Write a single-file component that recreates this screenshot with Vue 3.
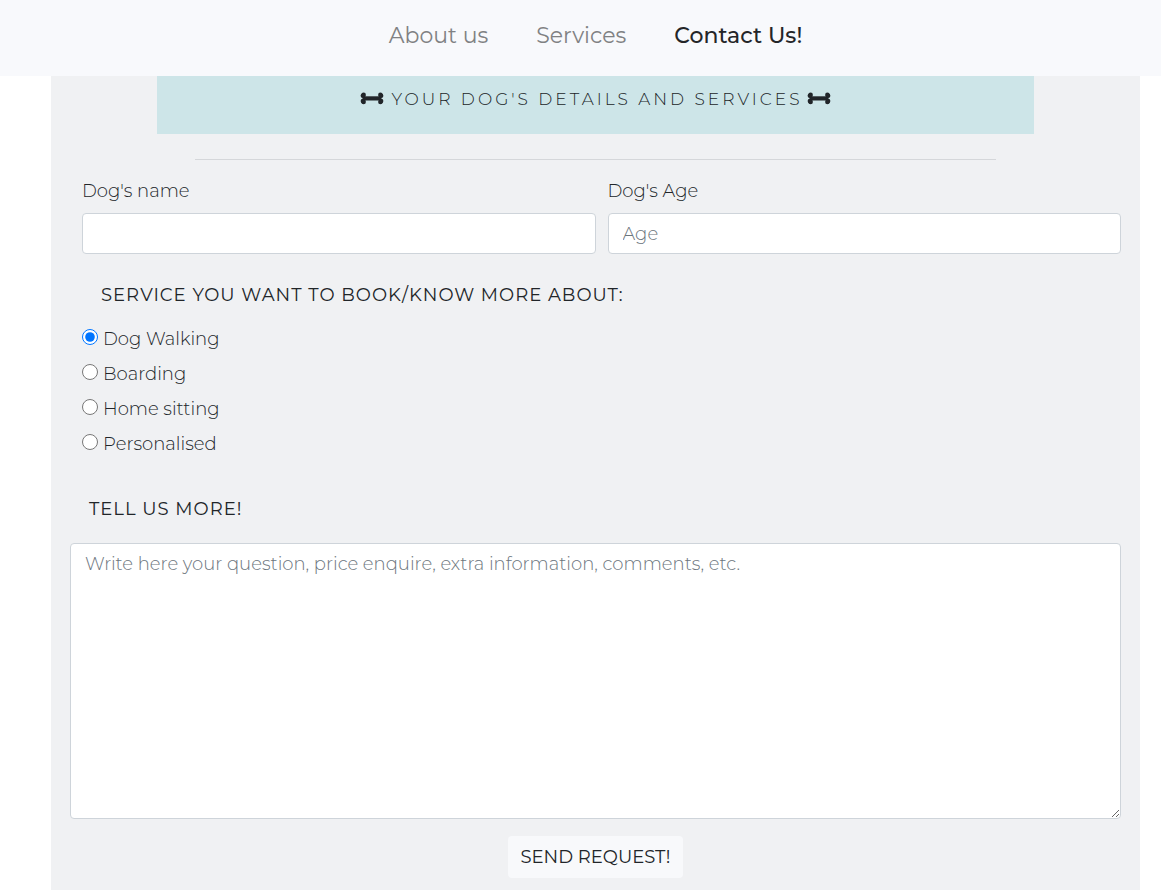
<script setup>
import { ref } from 'vue'

const links = [
  { label: 'About us', href: '#about', active: false },
  { label: 'Services', href: '#services', active: false },
  { label: 'Contact Us!', href: '#contact', active: true },
]

const services = [
  { value: 'walking', label: 'Dog Walking' },
  { value: 'boarding', label: 'Boarding' },
  { value: 'sitting', label: 'Home sitting' },
  { value: 'personalised', label: 'Personalised' },
]

const dogName = ref('')
const dogAge = ref('')
const service = ref('walking')
const message = ref('')
</script>

<template>
  <div class="page">
    <header class="navbar">
      <nav class="nav">
        <a
          v-for="link in links"
          :key="link.href"
          :href="link.href"
          class="nav-link"
          :class="{ active: link.active }"
        >{{ link.label }}</a>
      </nav>
    </header>

    <main class="panel">
      <h2 class="banner">
        <svg class="bone" viewBox="0 0 24 14" aria-hidden="true">
          <path d="M2.5 4.300h19v4.200h-19z" />
          <circle cx="3.6" cy="2.9" r="2.3" />
          <circle cx="2.9" cy="3.7" r="2.3" />
          <circle cx="3.6" cy="9.9" r="2.3" />
          <circle cx="2.9" cy="9.1" r="2.3" />
          <circle cx="20.4" cy="2.9" r="2.3" />
          <circle cx="21.1" cy="3.7" r="2.3" />
          <circle cx="20.4" cy="9.9" r="2.3" />
          <circle cx="21.1" cy="9.1" r="2.3" />
        </svg>
        <span class="banner-text">Your dog's details and services</span>
        <svg class="bone" viewBox="0 0 24 14" aria-hidden="true">
          <path d="M2.5 4.300h19v4.200h-19z" />
          <circle cx="3.6" cy="2.9" r="2.3" />
          <circle cx="2.9" cy="3.7" r="2.3" />
          <circle cx="3.6" cy="9.9" r="2.3" />
          <circle cx="2.9" cy="9.1" r="2.3" />
          <circle cx="20.4" cy="2.9" r="2.3" />
          <circle cx="21.1" cy="3.7" r="2.3" />
          <circle cx="20.4" cy="9.9" r="2.3" />
          <circle cx="21.1" cy="9.1" r="2.3" />
        </svg>
      </h2>
      <hr class="rule" />

      <form class="form" @submit.prevent>
        <div class="row">
          <div class="field">
            <label class="label" for="dog-name">Dog's name</label>
            <input id="dog-name" v-model="dogName" class="control" type="text" />
          </div>
          <div class="field">
            <label class="label" for="dog-age">Dog's Age</label>
            <input id="dog-age" v-model="dogAge" class="control" type="text" placeholder="Age" />
          </div>
        </div>

        <fieldset class="services">
          <legend class="heading">Service you want to book/know more about:</legend>
          <label v-for="item in services" :key="item.value" class="option" :for="item.value">
            <input :id="item.value" v-model="service" class="radio" type="radio" name="service" :value="item.value" />
            <span>{{ item.label }}</span>
          </label>
        </fieldset>

        <label class="heading more" for="message">Tell us more!</label>
        <textarea
          id="message"
          v-model="message"
          class="control message"
          placeholder="Write here your question, price enquire, extra information, comments, etc."
        ></textarea>

        <button class="send" type="submit">SEND REQUEST!</button>
      </form>
    </main>
  </div>
</template>

<style>
body {
  margin: 0;
  background: #fff;
}
</style>

<style scoped>
.page,
.page * {
  box-sizing: border-box;
}

.page {
  min-height: 100vh;
  display: flex;
  flex-direction: column;
  color: #212529;
  font-family: Montserrat, Inter, "Open Sans", sans-serif;
  font-size: 18px;
  font-weight: 300;
  line-height: 26px;
}

.navbar {
  padding: 20px 0 24px 30px;
  background: #f8f9fc;
}

.nav {
  display: flex;
  justify-content: center;
  gap: 48px;
}

.nav-link {
  color: #808183;
  font-size: 22px;
  font-weight: 400;
  line-height: 32px;
  text-decoration: none;
}

.nav-link.active {
  color: #242528;
  font-weight: 500;
}

.panel {
  flex: 1;
  margin: 0 21px 0 51px;
  padding-bottom: 12px;
  background: #f0f1f3;
}

.banner {
  display: flex;
  justify-content: center;
  align-items: center;
  gap: 7px;
  margin: 0 106px;
  padding: 10px 0 22px;
  background: #cde5e8;
  font-size: 17px;
  font-weight: 300;
  line-height: 26px;
  letter-spacing: 3px;
  text-transform: uppercase;
}

.banner-text {
  margin-right: -3px;
}

.bone {
  width: 24px;
  height: 14px;
  fill: #212529;
}

.rule {
  height: 1px;
  margin: 25px 144px 18px;
  border: 0;
  background: #d5d7da;
}

.form {
  display: flex;
  flex-direction: column;
  padding: 0 19px;
}

.row {
  display: grid;
  grid-template-columns: 1fr 1fr;
  gap: 12px;
  padding-left: 12px;
}

.field {
  display: flex;
  flex-direction: column;
  gap: 9px;
}

.control {
  width: 100%;
  height: 41px;
  padding: 7px 14px;
  border: 1px solid #ced4da;
  border-radius: 4px;
  background: #fff;
  color: #495057;
  font: inherit;
}

.control::placeholder {
  color: #6c757d;
  opacity: 1;
}

.services {
  margin: 28px 0 0;
  padding: 0 0 0 12px;
  border: 0;
}

.heading {
  padding: 0 19px;
  font-weight: 400;
  letter-spacing: 1px;
  text-transform: uppercase;
}

.services .heading {
  margin-bottom: 13px;
}

.option {
  display: flex;
  align-items: center;
  gap: 5px;
  width: max-content;
  height: 35px;
}

.radio {
  width: 16px;
  height: 16px;
  margin: 0 0 3px;
  accent-color: #0075ff;
}

.more {
  margin: 35px 0 21px;
}

.message {
  display: block;
  height: 276px;
  resize: both;
}

.send {
  align-self: center;
  margin-top: 17px;
  padding: 8px 12px;
  border: 0;
  border-radius: 4px;
  background: #f8f9fb;
  color: #212529;
  font: inherit;
  font-weight: 400;
}
</style>
